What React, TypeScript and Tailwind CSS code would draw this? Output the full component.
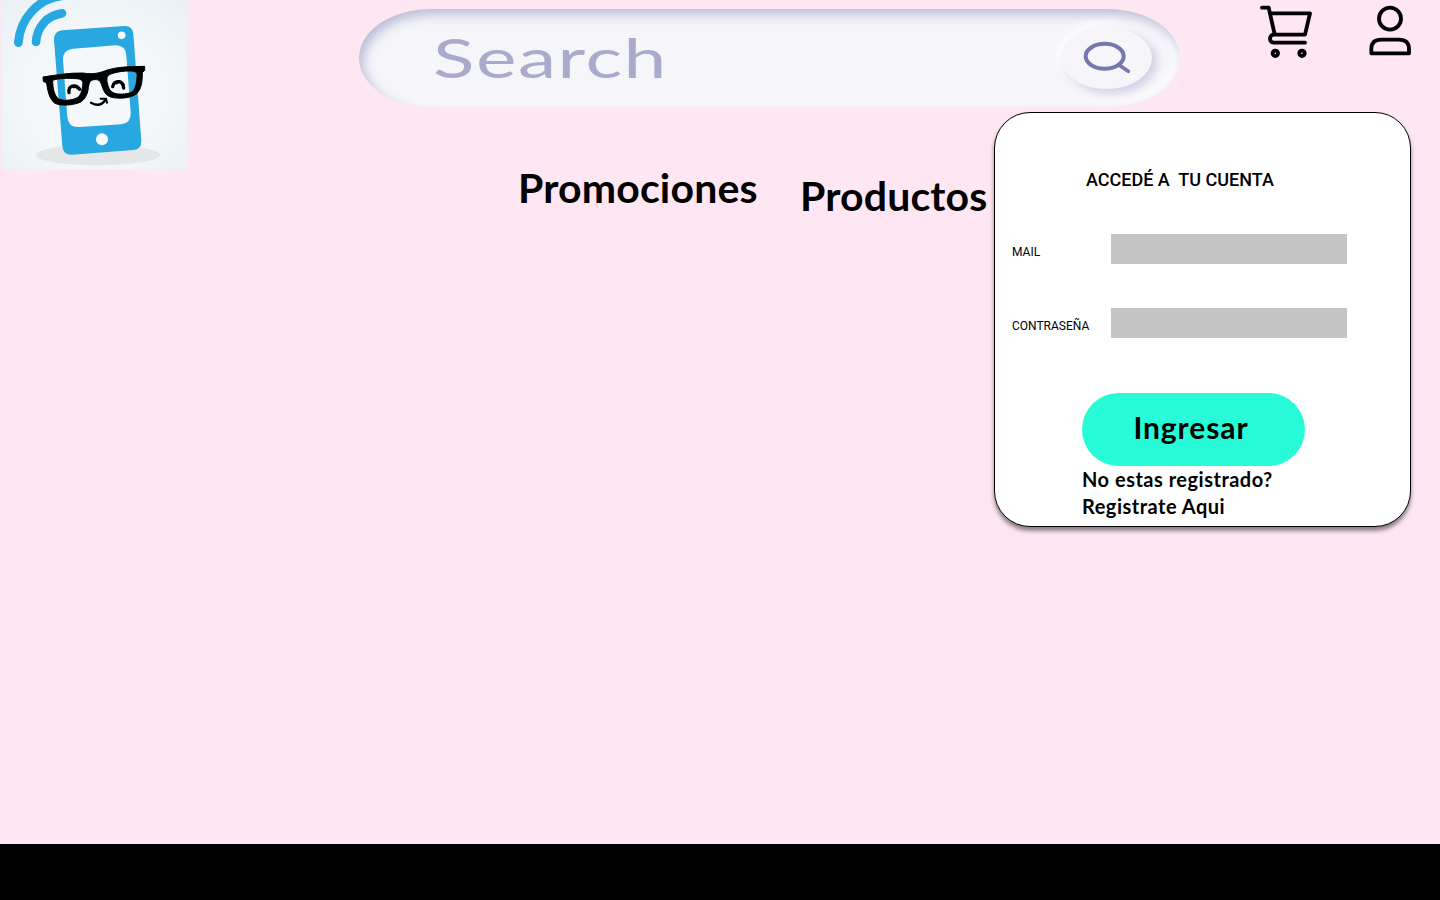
function Logo() {
  return (
    <svg className="block h-[169px] w-[185px]" viewBox="6 0 555 507" fill="none">
      <defs>
        <radialGradient id="logoBg" cx="0.5" cy="0.55" r="0.78">
          <stop offset="0" stopColor="#f9fbfd" />
          <stop offset="0.5" stopColor="#f3f7fa" />
          <stop offset="1" stopColor="#e8eff3" />
        </radialGradient>
      </defs>
      <rect x="6" width="555" height="507" fill="url(#logoBg)" />
      <ellipse cx="294" cy="465" rx="186" ry="31" fill="#e4e6e8" />
      <g stroke="#28a8e0" strokeWidth="26" strokeLinecap="round">
        <path d="M55 128C60 58 111 -4 188 -13" />
        <path d="M108 126C111 80 143 45 186 40" />
      </g>
      <path d="M187 91L372 78Q397 76 400 101L424 423Q425 448 400 450L216 464Q189 465 187 438L162 121Q160 94 187 91Z" fill="#28a8e0" />
      <path d="M220 146L346 136Q377 135 379 166L392 337Q394 370 364 373L238 381Q205 383 202 351L189 181Q187 150 220 146Z" fill="#f4f8fb" />
      <circle cx="365" cy="106" r="11.5" fill="#f8fbfd" />
      <circle cx="306" cy="418" r="18" fill="#f8fbfd" />
      <path
        fill="#000"
        stroke="#000"
        strokeWidth="3"
        strokeLinejoin="round"
        fillRule="evenodd"
        d="M129 231C166 225 211 218 248 219C282 224 298 219 322 210C361 199 398 200 434 199L434 211L427 218C427 246 424 267 410 281C393 295 356 297 335 292C316 287 311 273 304 253C300 239 291 238 282 239C270 241 268 246 265 263C263 286 252 303 235 309C215 316 181 318 165 310C149 299 143 274 140 249L130 244ZM158 241C158 268 164 287 175 296C188 304 214 301 228 295C241 289 245 277 248 258C251 242 244 237 229 236C204 234 174 235 158 241ZM330 223C321 228 319 236 322 249C327 270 333 277 348 281C364 284 387 282 397 275C408 265 411 243 411 222C410 216 403 214 394 213C372 212 346 216 330 223Z"
      />
      <g stroke="#000" strokeLinecap="round">
        <path d="M207 278C204 257 226 250 239 268M222 260Q228 256 234 264" strokeWidth="10" />
        <path d="M338 260C343 240 368 239 371 264M349 248Q361 239 370 255" strokeWidth="10" />
        <path d="M273 308C287 316 304 318 316 300" strokeWidth="7" />
        <path d="M302 296L318 296L321 308" strokeWidth="6" />
      </g>
    </svg>
  );
}

function CartIcon() {
  return (
    <svg className="block h-[60px] w-[60px]" viewBox="18 0 180 180" fill="none" stroke="#000" strokeWidth="11.5" strokeLinecap="round" strokeLinejoin="round">
      <path d="M36 23H56L74 103M61 40H180L165 104H72C56 104 56 128 72 128H165" />
      <circle cx="76" cy="160" r="8.2" />
      <circle cx="156" cy="160" r="8.2" />
    </svg>
  );
}

function UserIcon() {
  return (
    <svg className="block h-[60px] w-[50px]" viewBox="345 0 150 180" fill="none" stroke="#000" strokeWidth="11.5" strokeLinejoin="round">
      <circle cx="420" cy="56" r="33" />
      <path d="M364 160V147Q364 119 394 119H446Q477 119 477 147V160Z" />
    </svg>
  );
}

function SearchIcon() {
  return (
    <svg className="block h-[34px] w-[50px]" viewBox="158 122 150 102" fill="none" stroke="#7777ad">
      <ellipse cx="226" cy="168" rx="57" ry="37.5" strokeWidth="12" />
      <path d="M268 193L297 213" strokeWidth="11" strokeLinecap="round" />
    </svg>
  );
}

function SearchBar() {
  return (
    <div className="mt-[9px] flex h-[98px] w-[821px] items-center overflow-hidden rounded-[72px/49px] bg-[#f5f5fa] pl-[74px] shadow-[inset_4px_5px_12px_#b9b9d6,inset_-5px_-5px_12px_#ffffff]">
      <span className="w-[628px] whitespace-nowrap text-[54px] leading-[98px] text-[#aaaacc]">
        <span className="inline-block origin-left scale-x-[1.42] tracking-[0.02em]">Search</span>
      </span>
      <button className="flex h-[62px] w-[91px] items-center justify-center rounded-[50%] bg-[#f5f5fa] shadow-[5px_4px_10px_#cfcfe4,-4px_-3px_9px_#ffffff]">
        <SearchIcon />
      </button>
    </div>
  );
}

function Field({ label }: { label: string }) {
  return (
    <label className="flex h-[30px] items-center font-[Roboto,sans-serif] text-xs">
      <span className="w-[99px] pt-[6px]">{label}</span>
      <input className="h-[30px] w-[236px] bg-[#c4c4c4]" />
    </label>
  );
}

function LoginPanel() {
  return (
    <section className="h-[415px] w-[417px] rounded-[36px] border border-black bg-white pl-[17px] shadow-[0_4px_4px_rgba(0,0,0,0.45)]">
      <h2 className="whitespace-pre pl-[74px] pt-[56px] font-[Roboto,sans-serif] text-[18px] font-medium leading-[22px]">{"ACCEDÉ A  TU CUENTA"}</h2>
      <div className="mt-[43px] flex flex-col gap-[44px]">
        <Field label="MAIL" />
        <Field label="CONTRASEÑA" />
      </div>
      <div className="ml-[70px] mt-[55px]">
        <button className="flex h-[73px] w-[223px] justify-center rounded-full bg-[#27fbd7] pr-[5px] pt-[15px] text-[30px] font-bold leading-[38px] tracking-[0.9px]">
          Ingresar
        </button>
        <p className="whitespace-nowrap text-[20px] font-bold leading-[27px] tracking-[0.5px]">
          No estas registrado?
          <br />
          Registrate Aqui
        </p>
      </div>
    </section>
  );
}

export default function App() {
  return (
    <div className="flex h-[900px] w-[1440px] flex-col overflow-hidden bg-[#ffe6f3] font-[Lato,sans-serif] text-black">
      <header className="flex h-[112px] items-start pl-[2px]">
        <Logo />
        <div className="ml-[172px]">
          <SearchBar />
        </div>
        <div className="ml-[76px] flex gap-[49px]">
          <CartIcon />
          <UserIcon />
        </div>
      </header>
      <main className="flex flex-1 items-start">
        <nav className="flex w-[994px] items-start pl-[518px] pt-[51px] text-[41px] font-bold leading-[50px] tracking-[0.15px]">
          <a className="w-[282px]">Promociones</a>
          <a className="pt-[8px]">Productos</a>
        </nav>
        <LoginPanel />
      </main>
      <footer className="h-[56px] bg-black" />
    </div>
  );
}
